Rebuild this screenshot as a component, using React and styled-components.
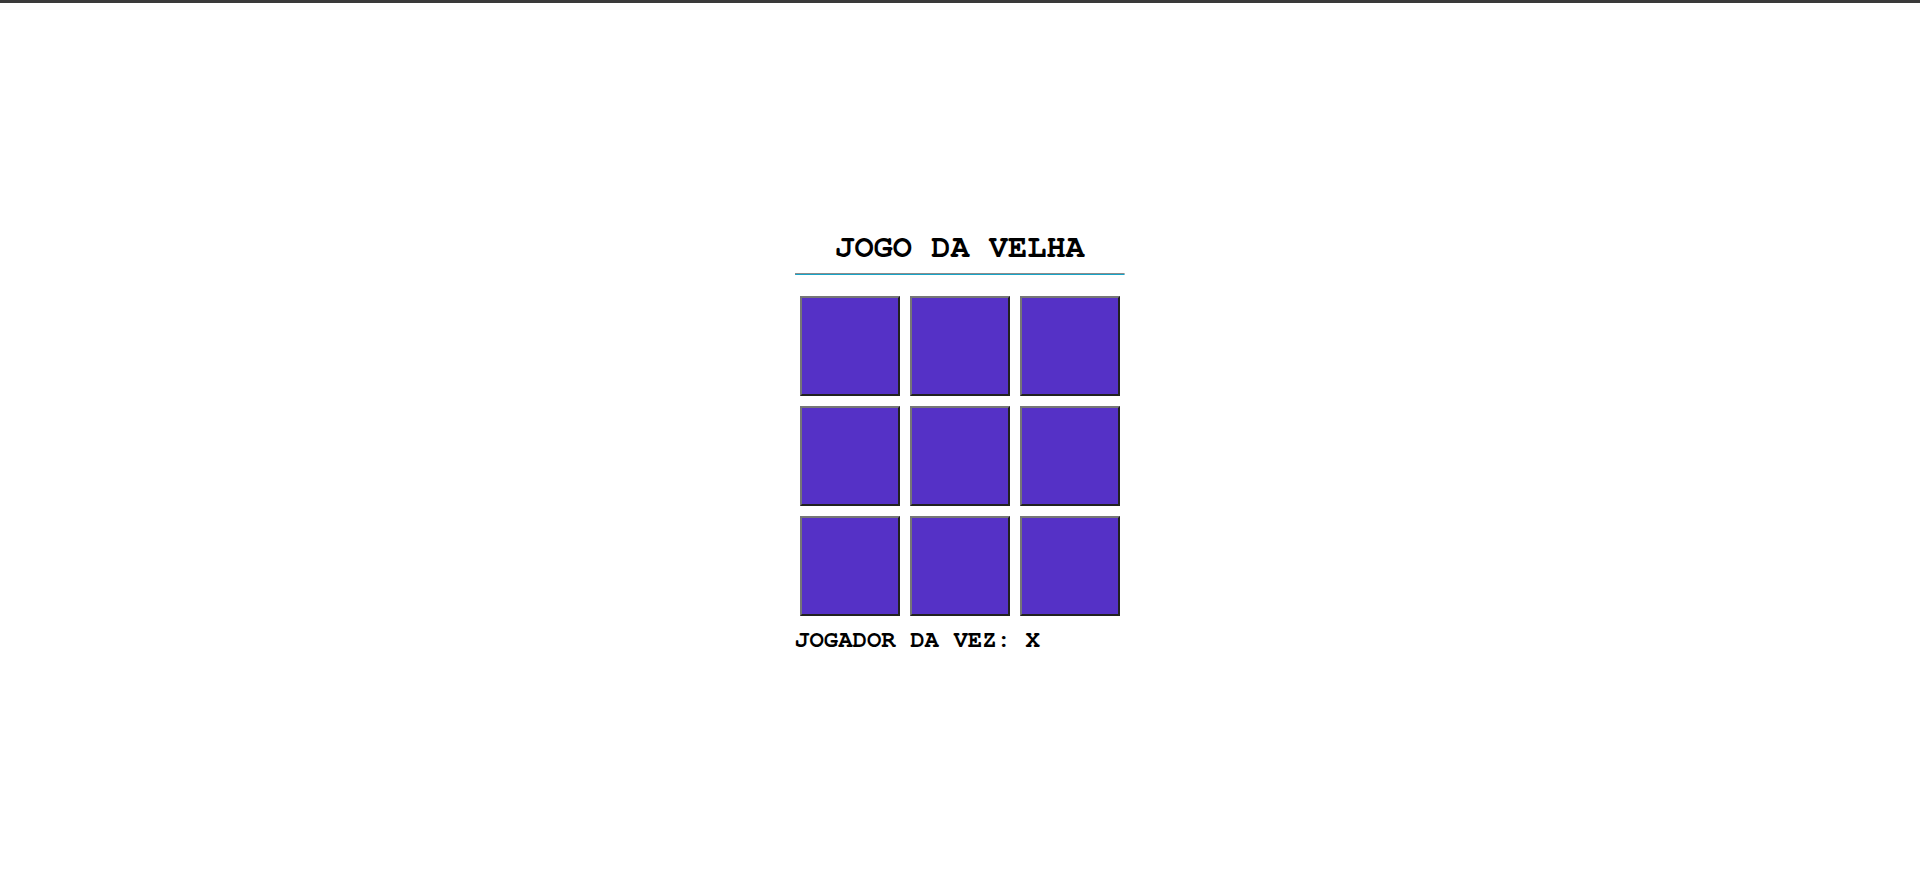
import React, { useState } from "react";
import styled, { createGlobalStyle } from "styled-components";

const GlobalStyle = createGlobalStyle`
  html, body {
    margin: 0;
    padding: 0;
    background: #ffffff;
  }
  body {
    font-family: "Nimbus Mono PS", "Nimbus Mono L", FreeMono, Courier, "Courier New", monospace;
  }
`;

const Page = styled.div`
  display: flex;
  flex-direction: column;
  height: 100vh;
`;

const TopBar = styled.div`
  height: 3px;
  background: #3a3a3a;
  flex-shrink: 0;
`;

const Stage = styled.main`
  flex: 1;
  display: flex;
  align-items: center;
  justify-content: center;
  padding-top: 2px;
`;

const Game = styled.section`
  width: 330px;
  display: flex;
  flex-direction: column;
`;

const Title = styled.h1`
  margin: 0;
  font-size: 32px;
  line-height: 36px;
  font-weight: bold;
  text-align: center;
  color: #000;
`;

// looks like an inset hr whose bottom edge was recoloured
const Divider = styled.hr`
  margin: 8px 0 0;
  height: 0;
  border-width: 1px;
  border-style: solid;
  border-color: #8c8c8c #e6e6e6 #17a4c8 #8c8c8c;
`;

const Board = styled.div`
  display: grid;
  grid-template-columns: repeat(3, 100px);
  gap: 10px;
  padding: 5px;
  margin-top: 16px;
`;

const Cell = styled.button`
  width: 100px;
  height: 100px;
  background: #5531c6;
  border: 2px outset #767676;
  padding: 0;
  font-family: inherit;
  font-size: 48px;
  font-weight: bold;
  color: #fff;
  cursor: pointer;
`;

const Status = styled.p`
  margin: 6px 0 0;
  font-size: 24px;
  line-height: 27px;
  font-weight: bold;
  color: #000;
`;

export default function App() {
  const [cells, setCells] = useState(Array(9).fill(""));
  const [player, setPlayer] = useState("X");

  const play = (i) => {
    if (cells[i]) return;
    const next = [...cells];
    next[i] = player;
    setCells(next);
    setPlayer(player === "X" ? "O" : "X");
  };

  return (
    <Page>
      <GlobalStyle />
      <TopBar />
      <Stage>
        <Game>
          <Title>JOGO DA VELHA</Title>
          <Divider />
          <Board>
            {cells.map((value, i) => (
              <Cell key={i} onClick={() => play(i)}>
                {value}
              </Cell>
            ))}
          </Board>
          <Status>JOGADOR DA VEZ: {player}</Status>
        </Game>
      </Stage>
    </Page>
  );
}
